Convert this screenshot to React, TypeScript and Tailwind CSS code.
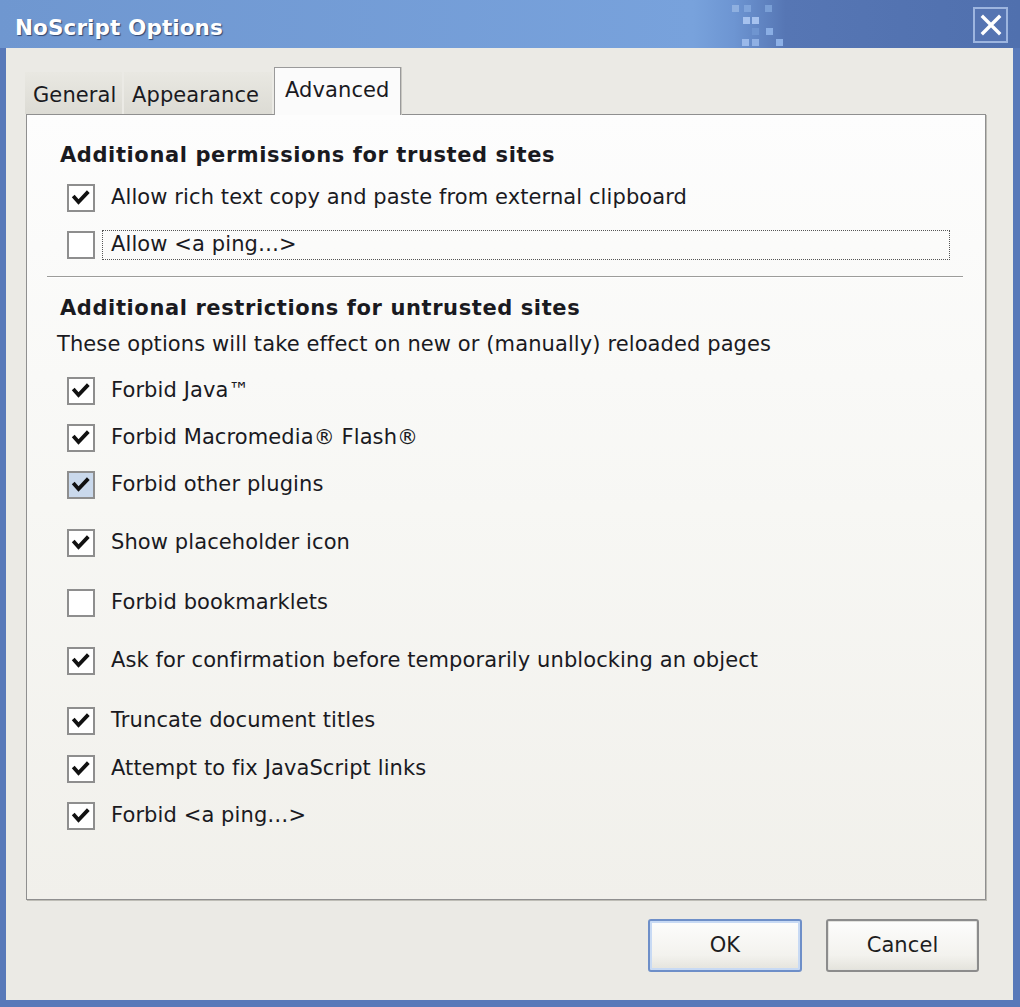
import React from "react";

type Opt = { label: string; checked: boolean; hover?: boolean; focus?: boolean; gap: number };

const trusted: Opt[] = [
  { label: "Allow rich text copy and paste from external clipboard", checked: true, gap: 10 },
  { label: "Allow <a ping…>", checked: false, focus: true, gap: 15 },
];

const untrusted: Opt[] = [
  { label: "Forbid Java™", checked: true, gap: 14 },
  { label: "Forbid Macromedia® Flash®", checked: true, gap: 15 },
  { label: "Forbid other plugins", checked: true, hover: true, gap: 15 },
  { label: "Show placeholder icon", checked: true, gap: 26 },
  { label: "Forbid bookmarklets", checked: false, gap: 28 },
  { label: "Ask for confirmation before temporarily unblocking an object", checked: true, gap: 26 },
  { label: "Truncate document titles", checked: true, gap: 28 },
  { label: "Attempt to fix JavaScript links", checked: true, gap: 16 },
  { label: "Forbid <a ping…>", checked: true, gap: 15 },
];

function CheckRow({ opt }: { opt: Opt }) {
  return (
    <div className="h-[32px] flex items-center pl-[40px]" style={{ marginTop: opt.gap }}>
      <span
        className={`w-[28px] h-[28px] shrink-0 border-2 border-[#8e8e8e] flex items-center justify-center ${
          opt.hover ? "bg-[#cad9ec]" : "bg-white"
        }`}
      >
        {opt.checked && (
          <svg width="24" height="24" viewBox="0 0 24 24">
            <polyline points="5.5,11.5 9.5,16 18,7" fill="none" stroke="#111" strokeWidth="3.8" strokeLinecap="square" />
          </svg>
        )}
      </span>
      <span
        className={`ml-[7px] h-[30px] flex items-center pl-[8px] border border-dotted whitespace-nowrap ${
          opt.focus ? "border-[#555] w-[848px]" : "border-transparent"
        }`}
      >
        {opt.label}
      </span>
    </div>
  );
}

function TitleBar() {
  // little pixel squares in the caption, like the XP theme
  const squares = [
    [732, 5, "#8fb0e0"],
    [744, 5, "#7fa4db"],
    [765, 5, "#7a9fd6"],
    [743, 17, "#a6c2ee"],
    [752, 17, "#a6c2ee"],
    [752, 28, "#6f95d0"],
    [766, 28, "#8aaee4"],
    [742, 39, "#9ab9ea"],
    [752, 39, "#8fb0e4"],
    [776, 39, "#8db0e6"],
  ] as const;

  return (
    <div className="relative h-[48px] shrink-0 flex items-center pl-[15px] pr-[12px] bg-[linear-gradient(90deg,#6f97d0_0%,#78a2dc_68%,#6d95d2_72%,#5676b4_77%,#5070ae_100%)]">
      {squares.map(([x, y, c], i) => (
        <span key={i} className="absolute w-[7px] h-[7px]" style={{ left: x, top: y, background: c }} />
      ))}
      <span className="pt-[8px] text-[21.5px] font-bold text-white [text-shadow:1px_1px_1px_#31466f]">
        NoScript Options
      </span>
      <span className="ml-auto mt-[2px] w-[35px] h-[36px] border-2 border-[#9db5df] flex items-center justify-center bg-[#5574b2]">
        <svg width="22" height="22" viewBox="0 0 22 22">
          <path d="M3 3 L19 19 M19 3 L3 19" stroke="#fff" strokeWidth="3.4" strokeLinecap="square" />
        </svg>
      </span>
    </div>
  );
}

function Tab({ label, width, active }: { label: string; width: string; active?: boolean }) {
  if (active) {
    return (
      <div
        className={`${width} h-[48px] -mb-[1px] relative z-10 bg-[#fbfbfb] border border-b-0 border-[#9a9a9a] [box-shadow:1px_0_0_#c9c8c2] flex items-start pt-[7px] pl-[10px]`}
      >
        {label}
      </div>
    );
  }
  return (
    <div
      className={`${width} h-[42px] bg-[linear-gradient(180deg,#e9e8e2_0%,#dcdbd4_100%)] flex items-center pl-[8px] pt-[5px]`}
    >
      {label}
    </div>
  );
}

function Button({ label, primary }: { label: string; primary?: boolean }) {
  return (
    <button
      className={`h-[53px] rounded-[3px] text-[21px] text-[#1e1e1e] bg-[linear-gradient(180deg,#fdfdfc_0%,#f3f2ee_70%,#e4e3dc_100%)] ${
        primary
          ? "w-[154px] border-2 border-[#6e8fc8] [box-shadow:inset_0_0_0_2px_#c8daf4]"
          : "w-[153px] border-2 border-[#8c8c8c] [box-shadow:inset_0_0_0_1px_#e2e2de]"
      }`}
    >
      {label}
    </button>
  );
}

export default function App() {
  return (
    <div className="w-[1020px] h-[1007px] bg-[#5879b9] flex flex-col overflow-hidden font-['DejaVu_Sans',sans-serif] text-[21px] tracking-[0.1px] text-[#1a1a1f]">
      <TitleBar />

      <div className="flex-1 ml-[6px] mr-[7px] mb-[7px] bg-[#ebeae5] flex flex-col pl-[19px] pr-[27px] pt-[19px]">
        {/* Tabs */}
        <div className="flex items-end gap-[2px]">
          <Tab label="General" width="w-[97px]" />
          <Tab label="Appearance" width="w-[148px]" />
          <Tab label="Advanced" width="w-[127px]" active />
        </div>

        {/* Panel */}
        <div className="ml-[1px] h-[786px] border border-[#8f8f8f] [box-shadow:1px_1px_0_#bebdb6] bg-[linear-gradient(180deg,#fdfdfd_0%,#f7f7f4_50%,#f1f0eb_100%)] flex flex-col pt-[25px]">
          <div className="h-[32px] flex items-center pl-[33px] font-bold tracking-[0.6px]">
            Additional permissions for trusted sites
          </div>
          {trusted.map((o) => (
            <CheckRow key={o.label} opt={o} />
          ))}

          <div className="mt-[15px] ml-[20px] mr-[22px] h-[1px] bg-[#9c9c9a] [box-shadow:0_1px_0_#ffffff]" />

          <div className="mt-[16px] h-[32px] flex items-center pl-[33px] font-bold tracking-[0.6px]">
            Additional restrictions for untrusted sites
          </div>
          <div className="mt-[4px] h-[32px] flex items-center pl-[30px]">
            These options will take effect on new or (manually) reloaded pages
          </div>
          {untrusted.map((o) => (
            <CheckRow key={o.label} opt={o} />
          ))}
        </div>

        {/* Buttons */}
        <div className="mt-[19px] mr-[7px] flex justify-end gap-[24px]">
          <Button label="OK" primary />
          <Button label="Cancel" />
        </div>
      </div>
    </div>
  );
}
